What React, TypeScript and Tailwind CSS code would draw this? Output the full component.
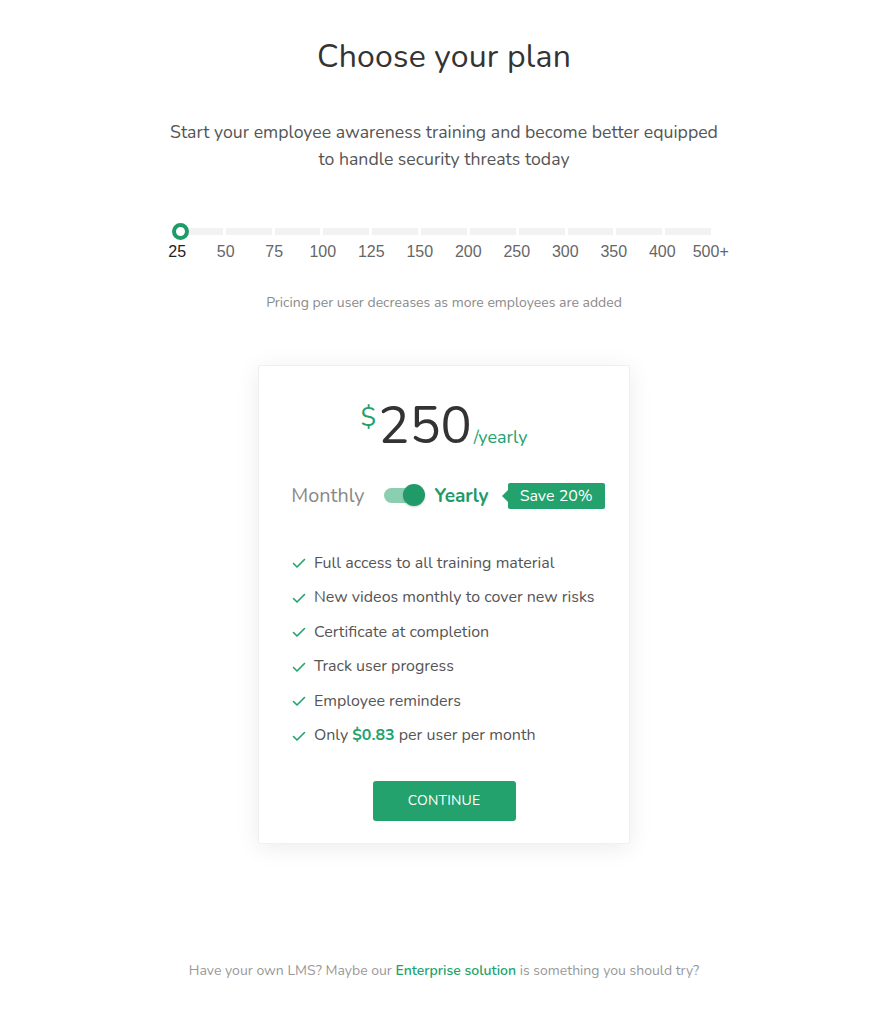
const stops = ['25', '50', '75', '100', '125', '150', '200', '250', '300', '350', '400', '500+'];

const features = [
  'Full access to all training material',
  'New videos monthly to cover new risks',
  'Certificate at completion',
  'Track user progress',
  'Employee reminders',
];

function Check() {
  return (
    <svg width="14" height="14" viewBox="0 0 14 14" fill="none" className="shrink-0">
      <path d="M1.5 7.5 L5 11 L12.5 3.5" stroke="#23a26d" strokeWidth="1.6" strokeLinecap="round" strokeLinejoin="round" />
    </svg>
  );
}

export default function App() {
  return (
    <div className="min-h-[1024px] w-full bg-white font-['Nunito','Lato',sans-serif] text-[#333]">
      <div className="flex flex-col items-center pl-[7px]">

        {/* Header */}
        <h1 className="mt-[37px] text-[32px] leading-[40px] text-[#333] tracking-[0.2px]">Choose your plan</h1>
        <p className="mt-[42px] text-center text-[17.7px] leading-[27px] text-[#555]">
          Start your employee awareness training and become better equipped<br />
          to handle security threats today
        </p>

        {/* Slider */}
        <div className="mt-[55px] w-[582px]">
          <div className="relative px-[24px]">
            <div className="flex gap-[3px] h-[7px]">
              {stops.slice(1).map((s) => (
                <div key={s} className="flex-1 bg-[#f2f2f2]" />
              ))}
            </div>
            <div className="absolute left-[19px] top-[-5px] w-[17px] h-[17px] rounded-full border-[4px] border-[#1f9a68] bg-white" />
          </div>
          <div className="grid grid-cols-12 mt-[7px] font-['Liberation_Sans',Arial,sans-serif] text-[16px] leading-[19px]">
            {stops.map((s, i) => (
              <span key={s} className={i === 0 ? 'text-center text-[#222]' : 'text-center text-[#666]'}>{s}</span>
            ))}
          </div>
        </div>

        <p className="mt-[33px] text-[14px] leading-[18px] text-[#8a8a8a]">Pricing per user decreases as more employees are added</p>

        {/* Card */}
        <div className="mt-[53px] w-[372px] h-[479px] bg-white border border-[#f0f0f0] shadow-[0_4px_24px_rgba(0,0,0,0.08)] rounded-[2px] flex flex-col items-center">
          <div className="mt-[31px] flex items-end">
            <span className="text-[26px] leading-none text-[#23a26d] self-start mt-[8px] mr-[2px]">$</span>
            <span className="text-[52px] leading-[58px] text-[#333]">250</span>
            <span className="text-[18px] leading-none text-[#23a26d] mb-[9px] ml-[2px]">/yearly</span>
          </div>

          <div className="mt-[26px] ml-[8px] flex items-center">
            <span className="text-[19.8px] text-[#888]">Monthly</span>
            <div className="relative ml-[19px] w-[40px] h-[15px] rounded-full bg-[#8ccfb0]">
              <div className="absolute right-[-1px] top-[-4px] w-[22px] h-[22px] rounded-full bg-[#1f9a68] shadow-[0_1px_2px_rgba(0,0,0,0.2)]" />
            </div>
            <span className="ml-[11px] text-[19px] font-bold text-[#1f9a68]">Yearly</span>
            <div className="relative ml-[19px] h-[26px] px-[12px] flex items-center bg-[#23a26d] rounded-[2px] text-white text-[16px]">
              <span className="absolute left-[-6px] top-[7px] w-0 h-0 border-y-[6px] border-y-transparent border-r-[6px] border-r-[#23a26d]" />
              Save 20%
            </div>
          </div>

          <ul className="mt-[41px] self-start ml-[33px] flex flex-col gap-[11px] text-[16px] leading-[23.5px] text-[#555]">
            {features.map((f) => (
              <li key={f} className="flex items-center gap-[8px]">
                <Check />
                <span>{f}</span>
              </li>
            ))}
            <li className="flex items-center gap-[8px]">
              <Check />
              <span>Only <b className="font-bold text-[#23a26d]">$0.83</b> per user per month</span>
            </li>
          </ul>

          <button className="mt-[33px] w-[143px] h-[40px] rounded-[3px] bg-[#23a26d] text-white text-[14px] tracking-[0.2px]">CONTINUE</button>
        </div>

        {/* Footer */}
        <p className="mt-[118px] text-[14px] leading-[18px] text-[#999]">
          Have your own LMS? Maybe our <a className="font-semibold text-[#23a26d]">Enterprise solution</a> is something you should try?
        </p>
      </div>
    </div>
  );
}
